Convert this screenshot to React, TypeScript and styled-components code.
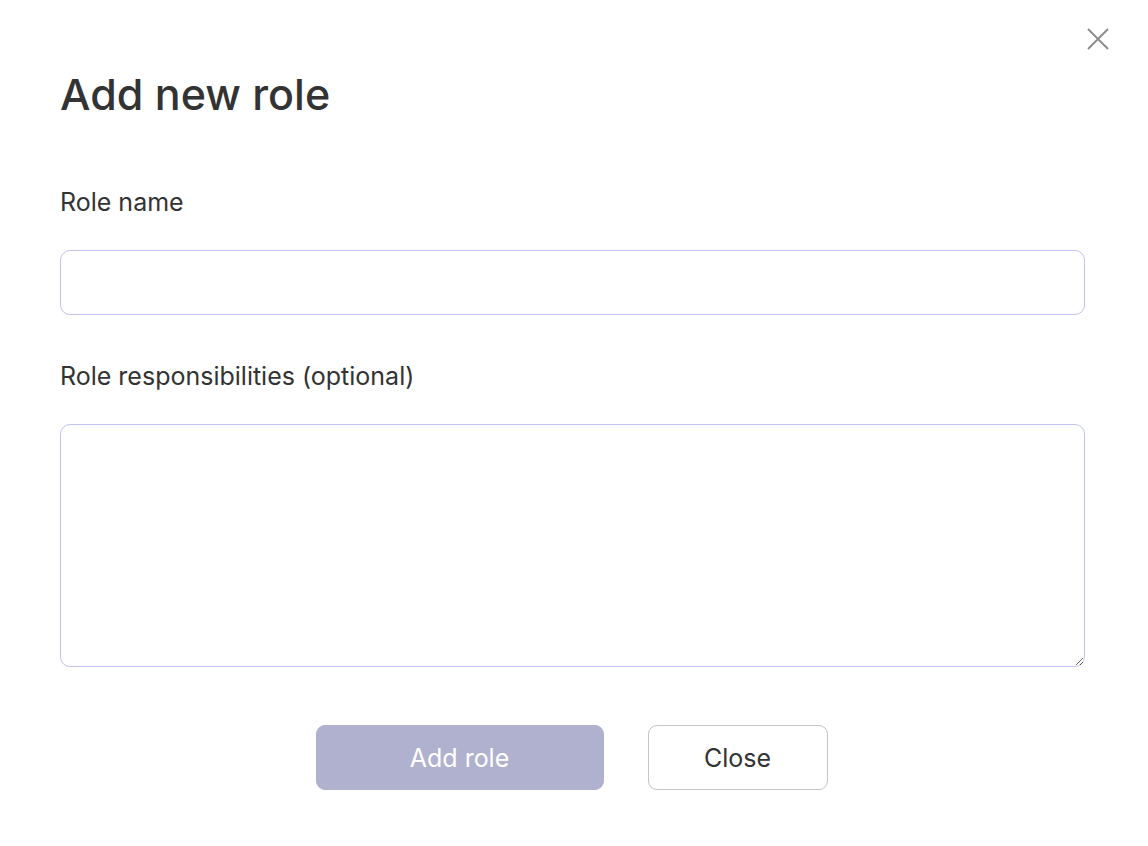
import React from "react";
import styled, { createGlobalStyle } from "styled-components";

const Global = createGlobalStyle`
  html, body { margin: 0; padding: 0; background: #fff; }
  body { font-family: Inter, "Noto Sans", sans-serif; color: #333; }
  * { box-sizing: border-box; }
`;

const Modal = styled.div`
  position: relative;
  width: 1148px;
  min-height: 846px;
  padding: 68px 63px 0 60px;
  display: flex;
  flex-direction: column;
`;

const CloseIcon = styled.button`
  position: absolute;
  top: 28px;
  right: 39px;
  width: 22px;
  height: 22px;
  padding: 0;
  border: none;
  background: none;
  color: #8a8a8a;
  cursor: pointer;
`;

const Title = styled.h1`
  margin: 0;
  font-size: 43px;
  font-weight: 550;
  line-height: 52px;
  color: #333;
`;

const Field = styled.label<{ $top: number }>`
  display: flex;
  flex-direction: column;
  gap: 33px;
  margin-top: ${(p) => p.$top}px;
`;

const LabelText = styled.span`
  font-size: 25px;
  line-height: 30px;
  color: #333;
`;

const Input = styled.input`
  width: 100%;
  height: 65px;
  border: 1px solid #c3c3f3;
  border-radius: 10px;
  outline: none;
  font: inherit;
  font-size: 22px;
  padding: 0 16px;
`;

const TextArea = styled.textarea`
  width: 100%;
  height: 243px;
  border: 1px solid #c3c3f3;
  border-radius: 10px;
  outline: none;
  font: inherit;
  font-size: 22px;
  padding: 12px 16px;
  resize: vertical;
  display: block;
`;

const Actions = styled.div`
  display: flex;
  justify-content: center;
  gap: 44px;
  margin-top: 58px;
  padding-right: 2px;
`;

const Button = styled.button<{ $primary?: boolean }>`
  height: 65px;
  width: ${(p) => (p.$primary ? 288 : 180)}px;
  border-radius: 9px;
  font-family: Inter, "Noto Sans", sans-serif;
  font-size: 25px;
  border: 1px solid ${(p) => (p.$primary ? "#b0b1cf" : "#c4c4c4")};
  background: ${(p) => (p.$primary ? "#b0b1cf" : "#fff")};
  color: ${(p) => (p.$primary ? "#fff" : "#333")};
  cursor: pointer;
`;

export default function App() {
  return (
    <>
      <Global />
      <Modal>
        <CloseIcon aria-label="Close">
          <svg width="22" height="22" viewBox="0 0 22 22" fill="none" stroke="currentColor" strokeWidth="1.8">
            <path d="M1 1 L21 21 M21 1 L1 21" />
          </svg>
        </CloseIcon>
        <Title>Add new role</Title>
        <Field $top={67}>
          <LabelText>Role name</LabelText>
          <Input />
        </Field>
        <Field $top={46}>
          <LabelText>Role responsibilities (optional)</LabelText>
          <TextArea />
        </Field>
        <Actions>
          <Button $primary>Add role</Button>
          <Button>Close</Button>
        </Actions>
      </Modal>
    </>
  );
}
